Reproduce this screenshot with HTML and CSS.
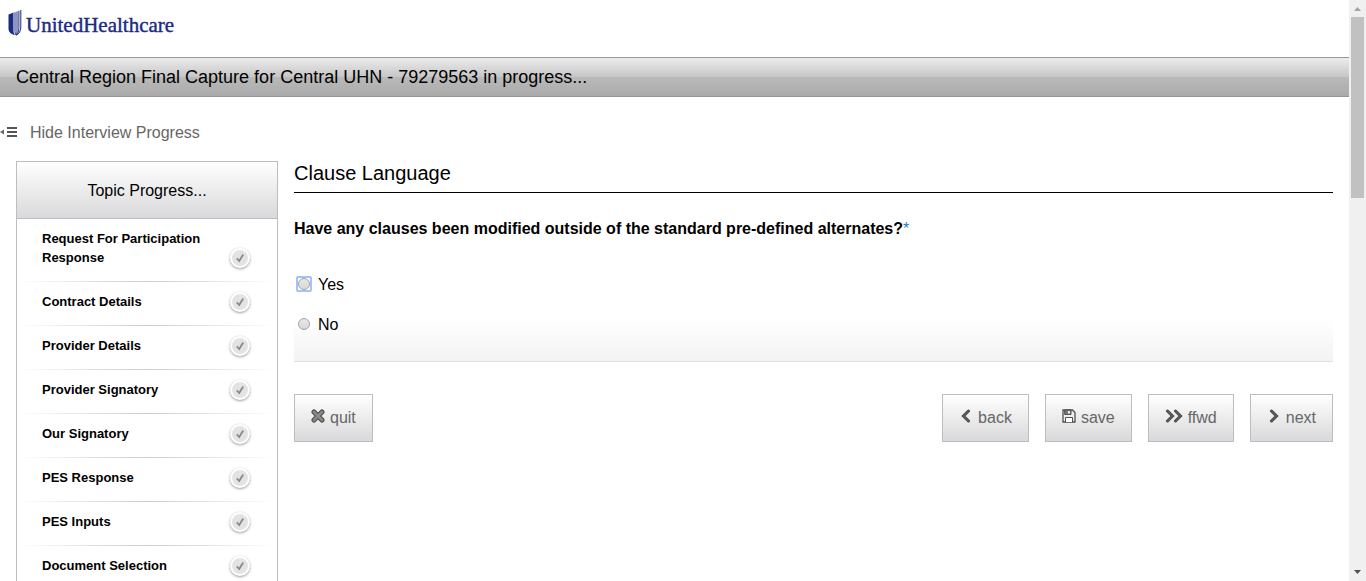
FILE: index.html
```
<!DOCTYPE html>
<html lang="en">
<head>
<meta charset="utf-8">
<title>Central Region Final Capture</title>
<link rel="stylesheet" href="styles.css">
</head>
<body>
<svg class="defs" aria-hidden="true">
  <symbol id="check" viewBox="0 0 16 16"><path d="M4.800 8.300l2.400 2.700 4-6.500" fill="none" stroke="#8a8a8a" stroke-width="1.800"/></symbol>
</svg>
<div class="page">
  <header class="brand">
    <svg class="brand-mark" viewBox="0 0 14 28" aria-hidden="true">
      <path d="M.5 5.500L5.500 3.500v18c0 2 .5 3.500 1.500 4.700C2.500 25 .5 22.800.5 19.500z" fill="#1b2a83"/>
      <path d="M7 3.200V21c0 2.500.2 4.200 1 5M9 2.500V20c0 2.600 0 4.200-.8 6M10.900 1.800v17c0 3-.8 5.500-2.500 7.200M12.800 1v17c0 4-1.500 6.800-4.800 8.200" fill="none" stroke="#1b2a83" stroke-width="1"/>
    </svg>
    <span class="brand-name">UnitedHealthcare</span>
  </header>
  <h1 class="title-bar">Central Region Final Capture for Central UHN - 79279563 in progress...</h1>
  <button class="toggle" type="button">
    <svg class="toggle-icon" viewBox="0 0 18 12" aria-hidden="true"><path d="M0 6l4-2.500v5z" fill="#666"/><path d="M7 2h10M7 6h10M7 10h10" stroke="#555" stroke-width="2"/></svg>
    <span>Hide Interview Progress</span>
  </button>
  <div class="layout">
    <aside class="topics">
      <h2 class="topics-head">Topic Progress...</h2>
      <ul class="topic-list">
        <li class="topic"><span class="topic-name">Request For Participation Response</span><svg class="tick"><use href="#check"/></svg></li>
        <li class="topic"><span class="topic-name">Contract Details</span><svg class="tick"><use href="#check"/></svg></li>
        <li class="topic"><span class="topic-name">Provider Details</span><svg class="tick"><use href="#check"/></svg></li>
        <li class="topic"><span class="topic-name">Provider Signatory</span><svg class="tick"><use href="#check"/></svg></li>
        <li class="topic"><span class="topic-name">Our Signatory</span><svg class="tick"><use href="#check"/></svg></li>
        <li class="topic"><span class="topic-name">PES Response</span><svg class="tick"><use href="#check"/></svg></li>
        <li class="topic"><span class="topic-name">PES Inputs</span><svg class="tick"><use href="#check"/></svg></li>
        <li class="topic"><span class="topic-name">Document Selection</span><svg class="tick"><use href="#check"/></svg></li>
      </ul>
    </aside>
    <main class="content">
      <h2 class="section-title">Clause Language</h2>
      <fieldset class="question">
        <legend class="question-text">Have any clauses been modified outside of the standard pre-defined alternates?<span class="required">*</span></legend>
        <label class="option"><span class="radio-box radio-box-current"><input class="radio" type="radio" name="modified" value="yes"></span>Yes</label>
        <label class="option"><span class="radio-box"><input class="radio" type="radio" name="modified" value="no"></span>No</label>
      </fieldset>
      <div class="actions">
        <button class="button button-quit" type="button">
          <svg class="icon" viewBox="0 0 14 14" aria-hidden="true"><path d="M3 3l8 8M11 3l-8 8" class="outline"/><path d="M3 3l8 8M11 3l-8 8" class="inner"/></svg>quit</button>
        <button class="button" type="button">
          <svg class="icon" viewBox="0 0 14 14" aria-hidden="true"><path d="M9.500 2l-5 5 5 5" class="chevron"/><path d="M9.500 2l-5 5 5 5" class="shine"/></svg>back</button>
        <button class="button" type="button">
          <svg class="icon" viewBox="0 0 14 14" aria-hidden="true"><path d="M1 1h9.500L13 3.500V13H1z" fill="#eee" stroke="#505050" stroke-width="1.300"/><path d="M3 1h6v4.500H3z" fill="#777" stroke="#505050"/><path d="M6 2h2v2.500H6z" fill="#eee"/><path d="M3.500 13V8.500h7V13" fill="#fff" stroke="#505050"/></svg>save</button>
        <button class="button" type="button">
          <svg class="icon icon-wide" viewBox="0 0 18 14" aria-hidden="true"><path d="M2.500 2l5 5-5 5M10.500 2l5 5-5 5" class="chevron"/><path d="M2.500 2l5 5-5 5M10.500 2l5 5-5 5" class="shine"/></svg>ffwd</button>
        <button class="button" type="button">
          <svg class="icon" viewBox="0 0 14 14" aria-hidden="true"><path d="M4.500 2l5 5-5 5" class="chevron"/><path d="M4.500 2l5 5-5 5" class="shine"/></svg>next</button>
      </div>
    </main>
  </div>
</div>
<div class="scrollbar" aria-hidden="true">
  <svg class="scroll-arrow" viewBox="0 0 17 17"><path d="M5 11h7L8.500 7z" fill="#a3a3a3"/></svg>
  <div class="scroll-track"><div class="scroll-thumb"></div></div>
  <svg class="scroll-arrow" viewBox="0 0 17 17"><path d="M5 6h7l-3.500 4z" fill="#505050"/></svg>
</div>
</body>
</html>
```
FILE: styles.css
```
* { box-sizing: border-box; }
body {
  margin: 0;
  height: 100vh;
  overflow: hidden;
  display: flex;
  background: #fff;
  color: #000;
  font: 16px/20px "Liberation Sans", Arial, sans-serif;
}
h1, h2, ul, fieldset { margin: 0; padding: 0; font-weight: normal; }
button { font: inherit; cursor: pointer; }
.defs { display: none; }
.page { flex: 1; min-width: 0; overflow: hidden; }

.brand {
  display: flex;
  align-items: flex-start;
  gap: 4px;
  height: 57px;
  padding: 9px 8px;
  color: #1b2a83;
}
.brand-mark { width: 14px; height: 28px; }
.brand-name {
  font: 21px/32px "Liberation Serif", "Times New Roman", serif;
  -webkit-text-stroke: 0.4px #1b2a83;
}
.title-bar {
  border: solid #959595;
  border-width: 1px 0;
  padding: 9px 16px;
  background: linear-gradient(#ececec, #c6c6c6 50%, #bababa 50%, #aaa);
  font-size: 18px;
}
.toggle {
  display: flex;
  align-items: center;
  gap: 12px;
  margin-top: 26px;
  padding: 0;
  border: 0;
  background: none;
  color: #666;
}
.toggle-icon { width: 18px; height: 12px; margin-bottom: 2px; }

.layout {
  display: grid;
  grid-template-columns: 262px minmax(0, 1fr);
  align-items: start;
  gap: 16px;
  padding: 18px 16px;
}
.topics { border: 1px solid #bdbdbf; }
.topics-head {
  padding: 19px 0 17px;
  border-bottom: 1px solid #bdbdbf;
  background: linear-gradient(#fff, #d9d9db);
  font-size: 16px;
  text-align: center;
}
.topic-list { list-style: none; }
.topic {
  display: flex;
  align-items: flex-end;
  justify-content: space-between;
  padding: 10px 27px 14px 25px;
  background: linear-gradient(90deg, #fff, #ccc 50%, #fff) bottom / 100% 1px no-repeat;
}
.topic-name {
  width: 170px;
  padding-bottom: 1px;
  font-size: 13px;
  line-height: 19px;
  font-weight: bold;
}
.tick {
  width: 20px;
  height: 20px;
  border: 2px solid #fff;
  border-radius: 50%;
  background: #e3e3e3;
  box-shadow: 0 1px 3px rgba(0, 0, 0, 0.4);
}

.section-title {
  padding-bottom: 7px;
  border-bottom: 1px solid #000;
  font-size: 20px;
  line-height: 24px;
}
.question {
  min-width: 0;
  padding: 26px 0 26px;
  border: 0;
  border-bottom: 1px solid #e0e0e0;
  background: linear-gradient(#fff 75%, #f3f3f3);
}
.question-text {
  float: left;
  width: 100%;
  padding: 0 0 36px;
  font-weight: bold;
}
.required { color: #2a7ab8; font-weight: normal; }
.option {
  display: flex;
  align-items: center;
  gap: 6px;
  clear: both;
  width: max-content;
  padding-left: 2px;
}
.option + .option { margin-top: 20px; }
.radio-box {
  display: flex;
  align-items: center;
  justify-content: center;
  width: 16px;
  height: 16px;
  margin-bottom: 2px;
  border: 2px solid transparent;
  border-radius: 2px;
}
.radio-box-current { border-color: #a3c4fb; }
.radio {
  appearance: none;
  flex: none;
  width: 12px;
  height: 12px;
  margin: 0;
  border: 1px solid #a3a3a3;
  border-radius: 50%;
  background: linear-gradient(#e8e8e8, #d8d8d8);
}

.actions {
  display: flex;
  justify-content: flex-end;
  gap: 16px;
  margin-top: 32px;
}
.button {
  display: flex;
  align-items: center;
  gap: 5px;
  height: 48px;
  padding: 0 16px;
  border: 1px solid #bdbdbf;
  background: linear-gradient(#fff, #d9d9db);
  color: #666;
}
.button-quit { margin-right: auto; }
.icon { width: 14px; height: 14px; margin-bottom: 4px; }
.icon-wide { width: 18px; }
.icon path { stroke-linecap: round; }
.icon .outline { fill: none; stroke: #484848; stroke-width: 5; }
.icon .inner { fill: none; stroke: #888; stroke-width: 3; }
.icon .chevron { fill: none; stroke: #484848; stroke-width: 3; }
.icon .shine { fill: none; stroke: #707070; stroke-width: 1; }

.scrollbar {
  display: flex;
  flex-direction: column;
  width: 17px;
  background: #f0f0f0;
}
.scroll-arrow { width: 17px; height: 17px; }
.scroll-track { flex: 1; padding: 0 2px; }
.scroll-thumb { height: 33%; background: #c1c1c1; }
```
